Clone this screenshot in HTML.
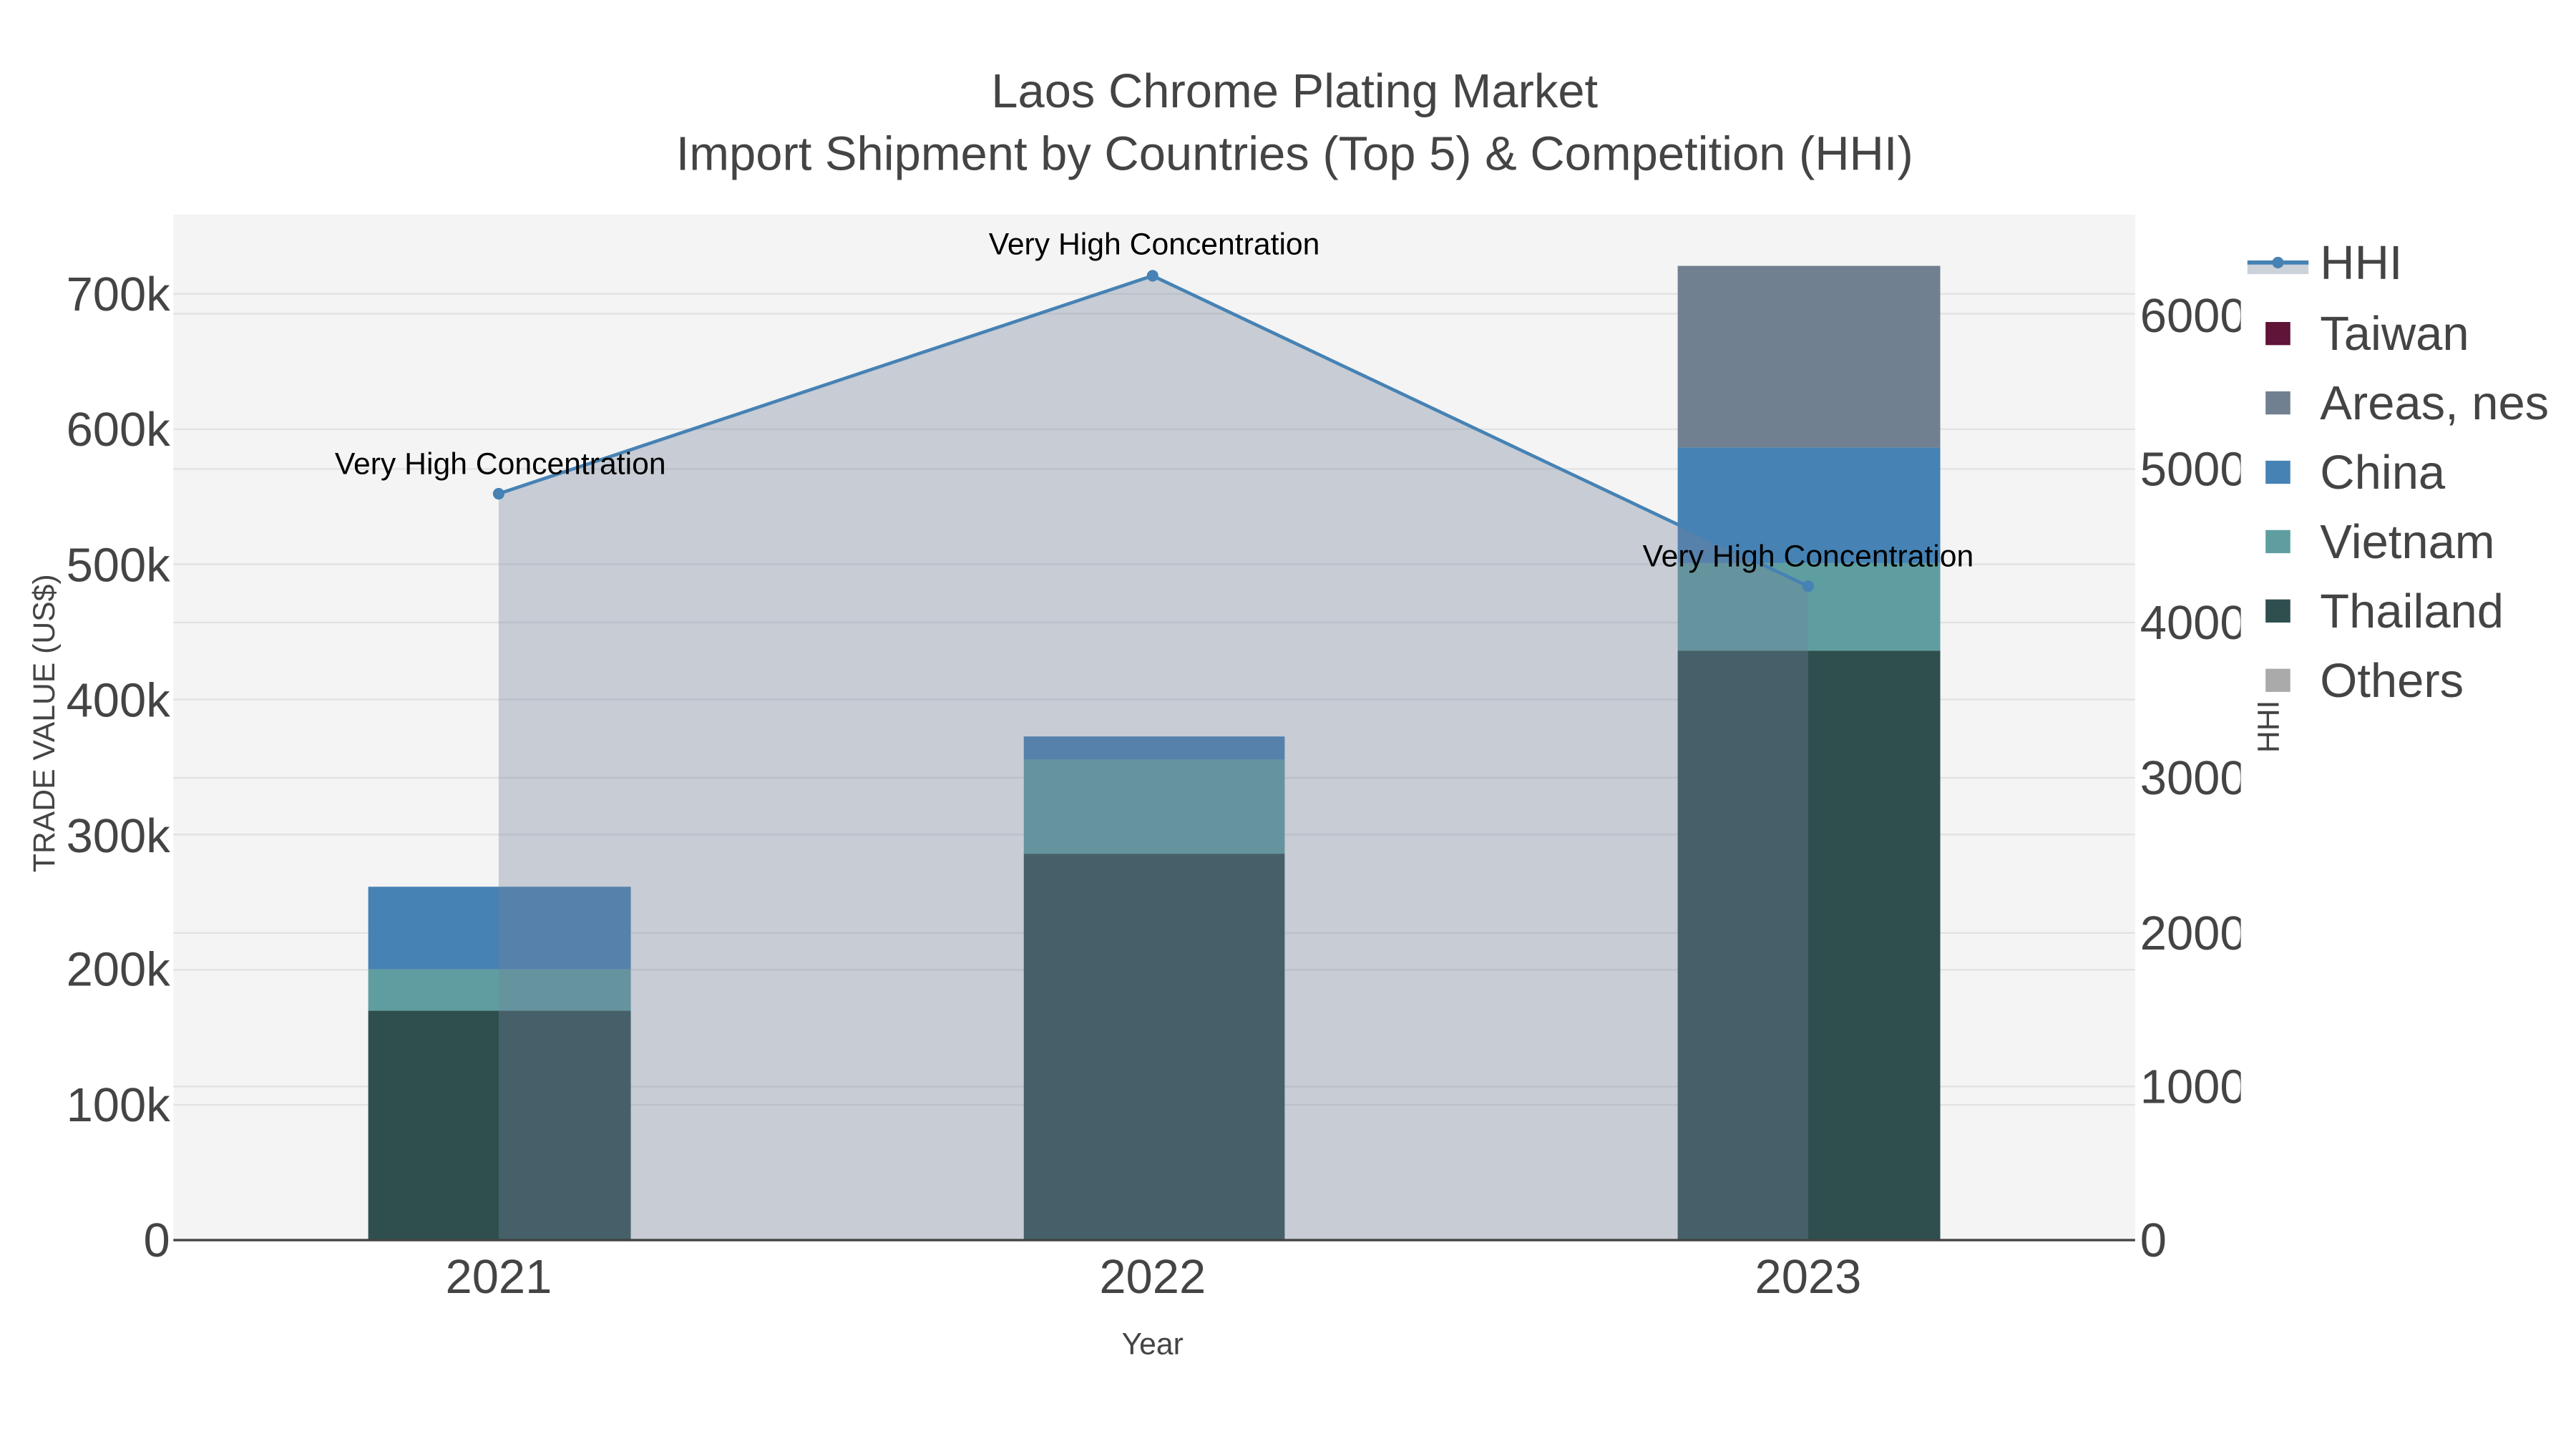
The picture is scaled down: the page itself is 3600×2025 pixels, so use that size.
<!DOCTYPE html>
<html><head><meta charset="utf-8"><style>
html,body{margin:0;padding:0;background:#fff;}
svg{display:block;}
text{font-family:"Liberation Sans",Arial,sans-serif;}
</style></head><body>
<svg width="3600" height="2025" viewBox="0 0 1560 877.5" xmlns="http://www.w3.org/2000/svg">
<defs><clipPath id="rc"><rect x="1290" y="0" width="67" height="877"/></clipPath></defs>
<rect x="0" y="0" width="1560" height="877.5" fill="#fff"/>
<rect x="105" y="130" width="1188" height="621" fill="#f4f4f4"/>
<g stroke="#e2e2e2" stroke-width="1">
<line x1="105" x2="1293" y1="669.1" y2="669.1"/><line x1="105" x2="1293" y1="587.3" y2="587.3"/>
<line x1="105" x2="1293" y1="505.4" y2="505.4"/><line x1="105" x2="1293" y1="423.6" y2="423.6"/>
<line x1="105" x2="1293" y1="341.7" y2="341.7"/><line x1="105" x2="1293" y1="259.9" y2="259.9"/>
<line x1="105" x2="1293" y1="178" y2="178"/>
<line x1="105" x2="1293" y1="658" y2="658"/><line x1="105" x2="1293" y1="565" y2="565"/>
<line x1="105" x2="1293" y1="471" y2="471"/><line x1="105" x2="1293" y1="377" y2="377"/>
<line x1="105" x2="1293" y1="284" y2="284"/><line x1="105" x2="1293" y1="190" y2="190"/>
</g>
<rect x="223" y="612" width="159" height="139" fill="#2f4f4f"/>
<rect x="223" y="587" width="159" height="25" fill="#5f9ea0"/>
<rect x="223" y="537" width="159" height="50" fill="#4682b4"/>
<rect x="620" y="517" width="158" height="234" fill="#2f4f4f"/>
<rect x="620" y="460" width="158" height="57" fill="#5f9ea0"/>
<rect x="620" y="446" width="158" height="14" fill="#4682b4"/>
<rect x="1016" y="394" width="159" height="357" fill="#2f4f4f"/>
<rect x="1016" y="341" width="159" height="53" fill="#5f9ea0"/>
<rect x="1016" y="271" width="159" height="70" fill="#4682b4"/>
<rect x="1016" y="161" width="159" height="110" fill="#708090"/>
<polygon points="302,299 698,167 1095,355 1095,751 302,751" fill="rgb(116,130,156)" fill-opacity="0.35"/>
<polyline points="302,299 698,167 1095,355" fill="none" stroke="#4682b4" stroke-width="2"/>
<circle cx="302" cy="299" r="3.5" fill="#4682b4"/><circle cx="698" cy="167" r="3.5" fill="#4682b4"/><circle cx="1095" cy="355" r="3.5" fill="#4682b4"/>
<line x1="105" x2="1293" y1="751" y2="751" stroke="#444" stroke-width="1.5"/>
<g font-size="18.5" fill="#000" text-anchor="middle">
<text x="303" y="287">Very High Concentration</text>
<text x="699" y="154">Very High Concentration</text>
<text x="1095" y="343">Very High Concentration</text>
</g>
<g fill="#444" text-anchor="middle" font-size="29">
<text x="784" y="65">Laos Chrome Plating Market</text>
<text x="784" y="103">Import Shipment by Countries (Top 5) &amp; Competition (HHI)</text>
</g>
<g fill="#444" font-size="29" text-anchor="end">
<text x="103" y="761">0</text><text x="103" y="679">100k</text><text x="103" y="597">200k</text>
<text x="103" y="516">300k</text><text x="103" y="434">400k</text><text x="103" y="352">500k</text>
<text x="103" y="270">600k</text><text x="103" y="188">700k</text>
</g>
<g fill="#444" font-size="29" clip-path="url(#rc)">
<text x="1296" y="761">0</text><text x="1296" y="668">1000</text><text x="1296" y="575">2000</text>
<text x="1296" y="481">3000</text><text x="1296" y="387">4000</text><text x="1296" y="294">5000</text>
<text x="1296" y="201">6000</text>
</g>
<g fill="#444" font-size="29" text-anchor="middle">
<text x="302" y="783">2021</text><text x="698" y="783">2022</text><text x="1095" y="783">2023</text>
</g>
<text x="698" y="820" fill="#444" font-size="18.5" text-anchor="middle">Year</text>
<text transform="translate(33,438) rotate(-90)" fill="#444" font-size="18.5" text-anchor="middle">TRADE VALUE (US$)</text>
<text transform="translate(1380,440) rotate(-90)" fill="#444" font-size="18.5" text-anchor="middle">HHI</text>
<rect x="1361" y="159" width="37" height="7" fill="#ccd2da"/>
<line x1="1361" x2="1398" y1="159" y2="159" stroke="#4682b4" stroke-width="2.5"/>
<circle cx="1379.5" cy="159" r="3.5" fill="#4682b4"/>
<rect x="1372" y="195" width="15" height="14" fill="#5f1438"/>
<rect x="1372" y="237" width="15" height="14" fill="#708090"/>
<rect x="1372" y="279" width="15" height="14" fill="#4682b4"/>
<rect x="1372" y="321" width="15" height="14" fill="#5f9ea0"/>
<rect x="1372" y="363" width="15" height="14" fill="#2f4f4f"/>
<rect x="1372" y="405" width="15" height="14" fill="#aaaaaa"/>
<g fill="#444" font-size="29">
<text x="1405" y="169">HHI</text><text x="1405" y="212">Taiwan</text><text x="1405" y="254">Areas, nes</text>
<text x="1405" y="296">China</text><text x="1405" y="338">Vietnam</text><text x="1405" y="380">Thailand</text>
<text x="1405" y="422">Others</text>
</g>
</svg>
</body></html>
